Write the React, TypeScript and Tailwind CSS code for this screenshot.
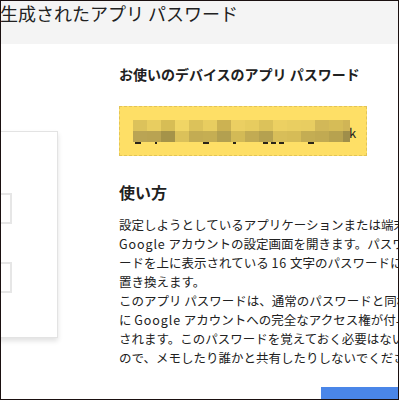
const topRow = [
  '#dcc25b', '#e8cd60', '#d7bd55', '#f0d565', '#dcc25a', '#e8cd60', '#ccb252', '#ebcf62',
  '#e7cc5f', '#dcc25a', '#ecd062', '#e9ce61', '#e8cd61', '#d2b858', '#d6bc57', '#d0b556',
];
const bottomRow = [
  '#baa454', '#b9a352', '#a59349', '#dbc15a', '#c3ac53', '#c5ae53', '#b3a050', '#d3ba56',
  '#c2ab53', '#b5a150', '#d8be59', '#d6bc57', '#c4ad53', '#c1aa52', '#b7a24f', '#9f8e4a',
];

// little glyph tails that stick out under the blurred password
const tails = [
  { left: 2, width: 6 },
  { left: 22, width: 2 },
  { left: 70, width: 6 },
  { left: 100, width: 3 },
  { left: 130, width: 5 },
  { left: 138, width: 5 },
  { left: 146, width: 5 },
  { left: 175, width: 6 },
];

function Mosaic() {
  return (
    <div className="flex items-start">
      <div className="relative">
        {[topRow, bottomRow].map((row, r) => (
          <div key={r} className="flex">
            {row.map((c, i) => (
              <div
                key={i}
                className={`${i === row.length - 1 ? 'w-[7px]' : 'w-[14px]'} h-[11px]`}
                style={{ backgroundColor: c }}
              />
            ))}
          </div>
        ))}
        <div className="relative h-[3px]">
          {tails.map((t, i) => (
            <div
              key={i}
              className="absolute top-0 h-[2px] bg-[#2a2418]"
              style={{ left: t.left, width: t.width }}
            />
          ))}
        </div>
      </div>
      <span className="mt-[5px] -ml-[1px] text-[13px] leading-[16px] text-[#222]">k</span>
    </div>
  );
}

const Latin = ({ children }: { children: string }) => (
  <span className="tracking-[0.9px]">{children}</span>
);

export default function App() {
  return (
    <div
      className="relative w-[399px] h-[400px] overflow-hidden border border-[#1a1010] bg-white text-[#212121]"
      style={{ fontFamily: '"Noto Sans CJK JP", "Noto Sans", sans-serif' }}
    >
      <div className="h-[43px] bg-[#f4f4f4]">
        <h1 className="-ml-[1px] text-[18px] leading-[24px] font-normal whitespace-nowrap">
          生成されたアプリ パスワード
        </h1>
      </div>

      <div className="flex">
        {/* device illustration, mostly cut off */}
        <div className="w-[118px] shrink-0 pt-[87px]">
          <div className="-ml-[31px] w-[88px] h-[207px] border border-[#e3e3e3] bg-white shadow-[0_3px_5px_rgba(0,0,0,0.12)] pt-[61px]">
            <div className="w-[41px] h-[31px] border-2 border-[#e6e6e6]" />
            <div className="mt-[38px] w-[41px] h-[31px] border-2 border-[#e6e6e6]" />
          </div>
        </div>

        <div className="flex-1 min-w-0 pt-[20px]">
          <h2 className="text-[14px] leading-[20px] font-bold whitespace-nowrap">
            お使いのデバイスのアプリ パスワード
          </h2>

          <div className="mt-[22px] w-[248px] h-[50px] bg-[#fedf66] border border-dashed border-[#e2c457] pl-[13px] pt-[13px]">
            <Mosaic />
          </div>

          <h3 className="mt-[24px] text-[16px] leading-[24px] font-bold">使い方</h3>

          <p className="mt-[11px] text-[12.5px] leading-[19px] whitespace-nowrap">
            設定しようとしているアプリケーションまたは端末の
            <br />
            <Latin>Google</Latin> アカウントの設定画面を開きます。パスワ
            <br />
            ードを上に表示されている <Latin>16</Latin> 文字のパスワードに
            <br />
            置き換えます。
            <br />
            このアプリ パスワードは、通常のパスワードと同様
            <br />
            に <Latin>Google</Latin> アカウントへの完全なアクセス権が付与
            <br />
            されます。このパスワードを覚えておく必要はない
            <br />
            ので、メモしたり誰かと共有したりしないでください。
          </p>

          <div className="mt-[20px] pl-[202px]">
            <button className="block w-[100px] h-[36px] bg-[#4a86e8] text-white text-[14px] leading-[20px] text-left pl-[36px] pt-[6px]">
              完了
            </button>
          </div>
        </div>
      </div>
    </div>
  );
}
